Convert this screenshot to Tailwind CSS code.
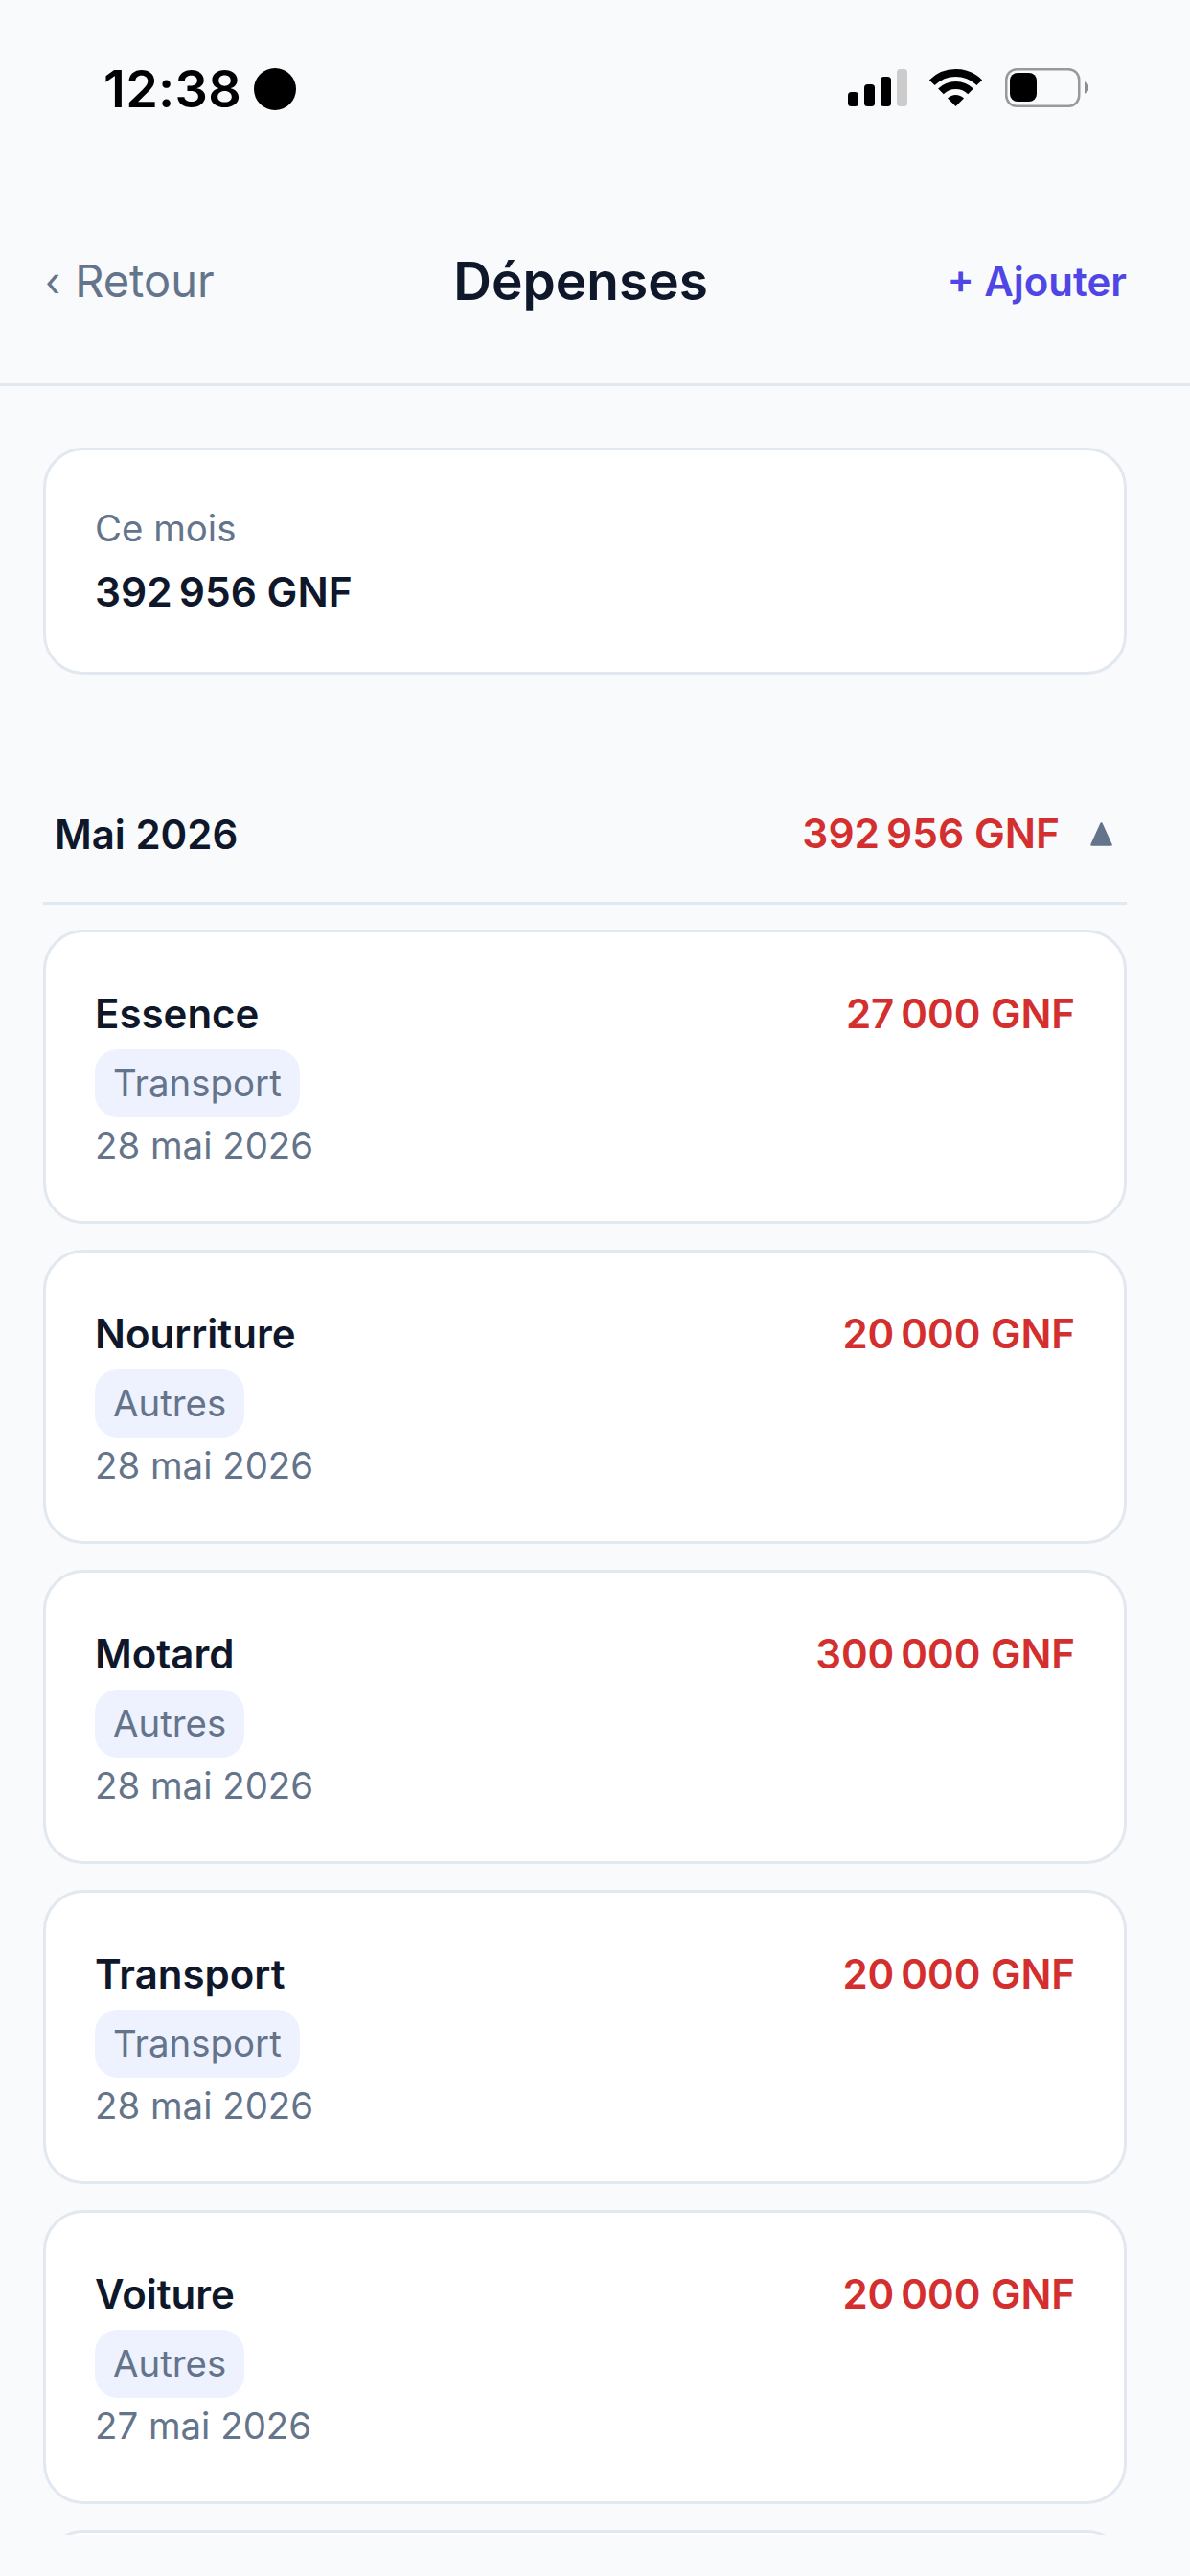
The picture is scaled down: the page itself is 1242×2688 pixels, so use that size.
<!DOCTYPE html>
<html lang="fr">
<head>
    <meta charset="UTF-8">
    <meta name="viewport" content="width=device-width, initial-scale=1.0">
    <title>Dépenses</title>
    <script src="https://cdn.jsdelivr.net/npm/@tailwindcss/browser@4"></script>
</head>
<body class="bg-[#f8fafc] font-[Inter,sans-serif] text-[#0f172a] h-[2688px] w-[1242px] overflow-hidden">
    <!-- Status bar -->
    <div class="h-[186px] pl-[108px] pr-[106px] pt-[71px] flex justify-between items-start">
        <div class="flex items-center gap-[13px] h-[43px]">
            <span class="text-[54px] leading-[43px] font-semibold text-black tracking-[0.3px]">12:38</span>
            <span class="w-[44px] h-[44px] rounded-full bg-black"></span>
        </div>
        <svg width="251" height="41" viewBox="0 0 251 41">
            <rect x="0" y="25" width="11" height="15" rx="3.5" fill="#000"/>
            <rect x="17" y="17" width="11" height="23" rx="3.5" fill="#000"/>
            <rect x="34" y="9" width="11" height="31" rx="3.5" fill="#000"/>
            <rect x="51" y="1" width="11" height="39" rx="3.5" fill="#ccc"/>
            <g transform="translate(86 1)">
                <path d="M1.75 14.25A35 35 0 0 1 51.25 14.25" fill="none" stroke="#000" stroke-width="8"/>
                <path d="M10.94 23.44A22 22 0 0 1 42.06 23.44" fill="none" stroke="#000" stroke-width="8"/>
                <path d="M26.5 39L18 30.5A12 12 0 0 1 35 30.5Z" fill="#000"/>
            </g>
            <rect x="165.25" y="1.25" width="76" height="38.5" rx="11" fill="none" stroke="#999" stroke-width="2.5"/>
            <rect x="169" y="5" width="28" height="30" rx="8" fill="#000"/>
            <path d="M247 14L251 17.5V23.5L247 27Z" fill="#8e8e8e"/>
        </svg>
    </div>

    <!-- Header -->
    <header class="h-[217px] pl-[47px] pr-[66px] flex justify-between items-center border-b-[3px] border-[#e2e8f0]">
        <a class="text-[47px] text-[#64748b] flex items-center gap-[15px]"><span class="text-[42px]">‹</span><span>Retour</span></a>
        <h1 class="text-[55px] font-semibold">Dépenses</h1>
        <a class="text-[42px] font-semibold text-[#4f46e5]">+ Ajouter</a>
    </header>

    <main class="h-[2242px] overflow-hidden pl-[45px] pr-[66px] pt-[64px]">
        <section class="h-[237px] bg-white border-[3px] border-[#e2e8f0] rounded-[42px] px-[51px] flex flex-col justify-center">
            <p class="text-[38.4px] leading-[62px] text-[#64748b]">Ce mois</p>
            <p class="text-[42.5px] leading-[66px] mt-[3px] font-semibold">392&#8239;956 GNF</p>
        </section>

        <div class="mt-[95px] h-[145px] pl-[12px] pr-[15px] flex justify-between items-center border-b-[3px] border-[#e2e8f0]">
            <span class="text-[42px] font-semibold">Mai 2026</span>
            <div class="flex items-center gap-[32px]">
                <span class="text-[42.5px] font-semibold text-[#d32f2f]">392&#8239;956 GNF</span>
                <svg width="23" height="25" viewBox="0 0 23 25"><path d="M11.5 1.5L21.5 23.5H1.5Z" fill="#64748b" stroke="#64748b" stroke-width="2.5" stroke-linejoin="round"/></svg>
            </div>
        </div>

        <div id="expenses" class="mt-[26px] flex flex-col gap-[27px]"></div>
    </main>

    <script>
        const expenses = [
            { name: 'Essence', amount: '27\u202f000 GNF', category: 'Transport', date: '28 mai 2026' },
            { name: 'Nourriture', amount: '20\u202f000 GNF', category: 'Autres', date: '28 mai 2026' },
            { name: 'Motard', amount: '300\u202f000 GNF', category: 'Autres', date: '28 mai 2026' },
            { name: 'Transport', amount: '20\u202f000 GNF', category: 'Transport', date: '28 mai 2026' },
            { name: 'Voiture', amount: '20\u202f000 GNF', category: 'Autres', date: '27 mai 2026' }
        ];

        const list = document.getElementById('expenses');
        list.innerHTML = expenses.map(item => `
            <article class="h-[307px] shrink-0 bg-white border-[3px] border-[#e2e8f0] rounded-[42px] px-[51px] pt-[48px]">
                <div class="flex justify-between items-center h-[72px]">
                    <span class="text-[42px] font-semibold">${item.name}</span>
                    <span class="text-[42px] font-semibold text-[#d32f2f]">${item.amount}</span>
                </div>
                <span class="mt-[2px] h-[71px] px-[19px] inline-flex items-center rounded-[24px] bg-[#eef2ff] text-[38.4px] text-[#64748b] align-top">${item.category}</span>
                <p class="text-[38.4px] leading-[58px] text-[#64748b]">${item.date}</p>
            </article>
        `).join('') + `
            <article class="h-[307px] shrink-0 bg-white border-[3px] border-[#e2e8f0] rounded-[42px]"></article>
        `;
    </script>
</body>
</html>
